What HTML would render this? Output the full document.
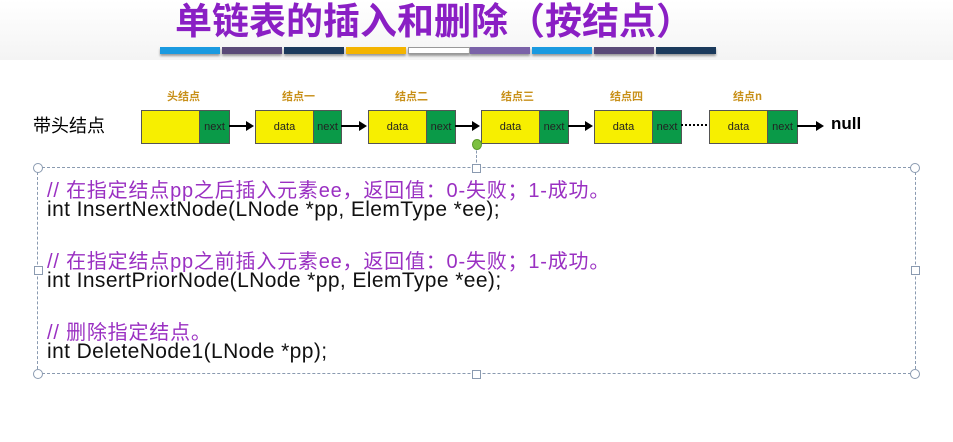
<!DOCTYPE html>
<html><head><meta charset="utf-8"><style>
body{margin:0;width:953px;height:442px;background:#fff;position:relative;overflow:hidden;font-family:"Liberation Sans","Noto Sans CJK SC",sans-serif}
.a{position:absolute}
.title{left:175px;top:-9px;font-size:37px;font-weight:bold;color:#8a1fc4;letter-spacing:0px;white-space:nowrap;font-family:"Noto Sans CJK SC",sans-serif}
.bar{top:47px;height:7px;width:60px;box-shadow:0 2px 2px #999}
.node{top:110px;height:32px;border:1px solid #555;display:flex;font-size:11px;color:#222}
.y{background:#f7ef00;width:57px;display:flex;align-items:center;justify-content:center}
.g{background:#0a9a48;flex:1;display:flex;align-items:center;justify-content:center;border-left:1px solid #555}
.lab{top:88px;font-size:11px;font-weight:bold;color:#c8901a;font-family:"Noto Sans CJK SC",sans-serif}
.ar{top:125px;height:2px;background:#000}
.ah{top:121px;width:0;height:0;border-top:5px solid transparent;border-bottom:5px solid transparent;border-left:8px solid #000}
.c{left:47px;font-size:20px;color:#9a30c2;white-space:nowrap;letter-spacing:0.8px}
.k{left:47px;font-size:21px;color:#111;white-space:nowrap;letter-spacing:0.4px}
.h{width:7px;height:7px;border:1px solid #8a9ab0;background:#fff}
.hc{width:8px;height:8px;border:1px solid #8a9ab0;border-radius:50%;background:#fff}
</style></head><body>
<div class="a" style="left:0;top:0;width:953px;height:60px;background:linear-gradient(#fff,#f4f4f4)"></div>
<div class="a title">单链表的插入和删除（按结点）</div>
<div class="a bar" style="left:160px;background:#1a9ae0"></div>
<div class="a bar" style="left:222px;background:#5a4a78"></div>
<div class="a bar" style="left:284px;background:#1b3a5c"></div>
<div class="a bar" style="left:346px;background:#f4b400"></div>
<div class="a bar" style="left:408px;background:#fff;border:1px solid #999;height:5px"></div>
<div class="a bar" style="left:470px;background:#7a62a8"></div>
<div class="a bar" style="left:532px;background:#1a9ae0"></div>
<div class="a bar" style="left:594px;background:#5a4a78"></div>
<div class="a bar" style="left:656px;background:#1b3a5c"></div>

<div class="a" style="left:33px;top:112px;font-size:18px;font-family:'Noto Sans CJK SC',sans-serif">带头结点</div>
<div class="a lab" style="left:167px">头结点</div>
<div class="a lab" style="left:282px">结点一</div>
<div class="a lab" style="left:395px">结点二</div>
<div class="a lab" style="left:501px">结点三</div>
<div class="a lab" style="left:610px">结点四</div>
<div class="a lab" style="left:733px">结点n</div>

<div class="a node" style="left:141px;width:87px"><div class="y"></div><div class="g">next</div></div>
<div class="a node" style="left:255px;width:85px"><div class="y">data</div><div class="g">next</div></div>
<div class="a node" style="left:368px;width:86px"><div class="y">data</div><div class="g">next</div></div>
<div class="a node" style="left:481px;width:86px"><div class="y">data</div><div class="g">next</div></div>
<div class="a node" style="left:594px;width:86px"><div class="y">data</div><div class="g">next</div></div>
<div class="a node" style="left:709px;width:87px"><div class="y">data</div><div class="g">next</div></div>

<div class="a ar" style="left:229px;width:18px"></div><div class="a ah" style="left:246px"></div>
<div class="a ar" style="left:341px;width:19px"></div><div class="a ah" style="left:359px"></div>
<div class="a ar" style="left:455px;width:18px"></div><div class="a ah" style="left:472px"></div>
<div class="a ar" style="left:568px;width:18px"></div><div class="a ah" style="left:585px"></div>
<div class="a" style="left:681px;top:124px;width:26px;border-top:2px dotted #000"></div>
<div class="a ar" style="left:797px;width:20px"></div><div class="a ah" style="left:816px"></div>
<div class="a" style="left:831px;top:114px;font-size:17px;font-weight:bold">null</div>

<div class="a" style="left:476px;top:146px;height:21px;border-left:1px dashed #8a9ab0"></div>
<div class="a" style="left:472px;top:139px;width:8px;height:9px;border-radius:50%;background:#7cc040;border:1px solid #5a9a2a"></div>
<div class="a" style="left:37px;top:167px;width:877px;height:205px;border:1px dashed #8a9ab0"></div>
<div class="a hc" style="left:33px;top:163px"></div>
<div class="a hc" style="left:910px;top:163px"></div>
<div class="a hc" style="left:33px;top:369px"></div>
<div class="a hc" style="left:910px;top:369px"></div>
<div class="a h" style="left:472px;top:164px"></div>
<div class="a h" style="left:472px;top:370px"></div>
<div class="a h" style="left:34px;top:266px"></div>
<div class="a h" style="left:911px;top:266px"></div>

<div class="a c" style="top:174px">// 在指定结点pp之后插入元素ee，返回值：0-失败；1-成功。</div>
<div class="a k" style="top:198px">int InsertNextNode(LNode *pp, ElemType *ee);</div>
<div class="a c" style="top:245px">// 在指定结点pp之前插入元素ee，返回值：0-失败；1-成功。</div>
<div class="a k" style="top:269px">int InsertPriorNode(LNode *pp, ElemType *ee);</div>
<div class="a c" style="top:316px">// 删除指定结点。</div>
<div class="a k" style="top:340px">int DeleteNode1(LNode *pp);</div>
</body></html>
